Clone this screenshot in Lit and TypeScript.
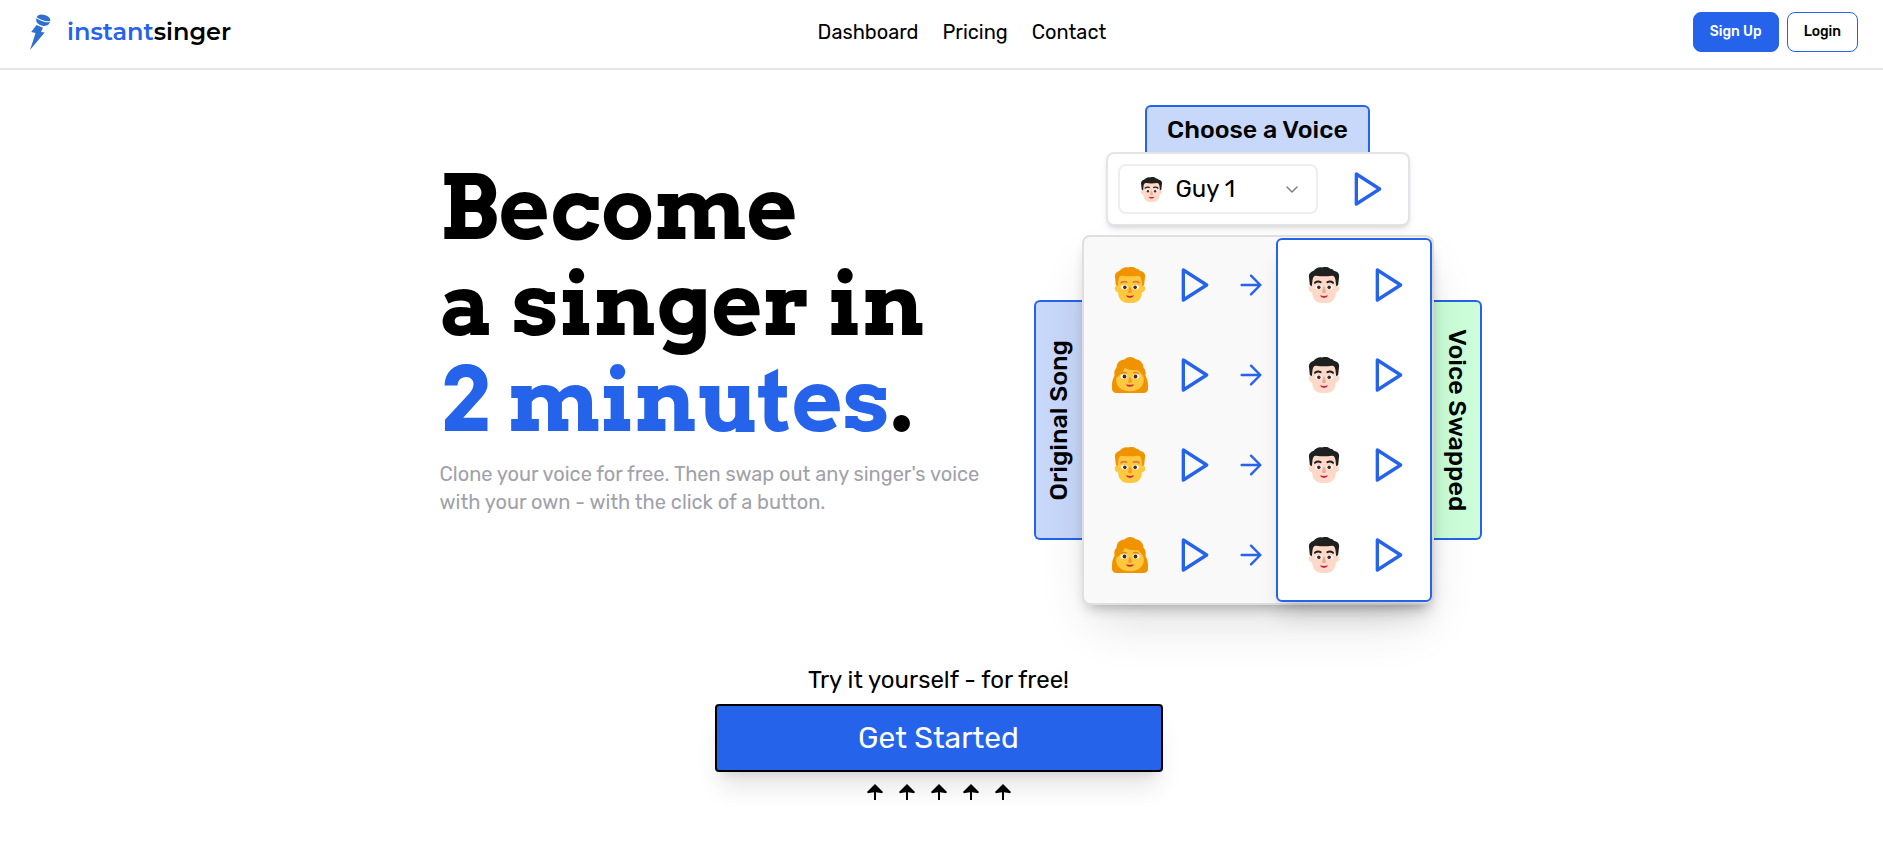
import { LitElement, html, css, svg } from "lit";
import { customElement, property } from "lit/decorators.js";

type FaceKind = "man" | "woman" | "guy";

@customElement("singer-face")
export class SingerFace extends LitElement {
  @property() kind: FaceKind = "man";

  static styles = css`
    :host { display: block; width: 36px; height: 36px; }
    svg { display: block; width: 100%; height: 100%; }
  `;

  private head(skin: string, hair: string, brow: string, nose: string, browWidth: number) {
    return svg`
      <path fill=${skin} d="M5 7h22v9.200c1.600 0 2.600 1.200 2.600 3s-1.300 3.300-3 3.300c-.2 5.800-3.400 9.500-8.600 9.500h-4c-5.200 0-8.400-3.700-8.600-9.500-1.700 0-3-1.500-3-3.300s1-3 2.600-3z"/>
      <path fill=${hair} d="M2.600 8.500C2.300 5.600 4.600 4.100 6.800 3.300 8.800.900 11.500-.3 14.300.5c2.500-1.200 5.500-.8 7.300 1.100 1.500.1 2.500.7 3.200 1.700 3.300.5 5 2.500 4.600 5.200l-.8 7.400-1.800 1.300-.5-5c-.3-3-1.300-4.600-3.300-4.500-4.500.700-9.500.700-14 0-2-.1-3 1.500-3.300 4.500l-.5 5-1.800-1.300z"/>
      <g fill="none" stroke=${brow} stroke-width=${browWidth} stroke-linecap="round">
        <path d="M8 14q2.200-1.800 5-.6M24 14q-2.200-1.800-5-.6"/>
      </g>
      <ellipse cx="11" cy="18" rx="2.900" ry="1.900" fill="#fff"/>
      <ellipse cx="21" cy="18" rx="2.900" ry="1.900" fill="#fff"/>
      <circle cx="11.400" cy="18.100" r="1.600" fill="#402a32"/>
      <circle cx="20.600" cy="18.100" r="1.600" fill="#402a32"/>
      <path fill=${nose} d="M15.500 17.500h1l1.300 5c.1.900-3.700.9-3.600 0z"/>
      <path fill="#c9224b" d="M12.500 25.200q3.500 1 7 0c-.5 3-6.500 3-7 0z"/>`;
  }

  private woman() {
    return svg`
      <path fill="#f09300" d="M11 2.300C13.500-.7 18.500-.7 21 2c4 .3 7 3.500 7 7.500 2 1.800 2.300 4.500 1.700 7 1.300 2.500 2.300 5 2.300 8.500V28c0 2.500-1.500 4-4 4H4c-2.500 0-4-1.500-4-4v-3c0-3.500 1-6 2.300-8.500-.6-2.500-.3-5.200 1.700-7 0-4 3-7.200 7-7.200z"/>
      <path fill="#ffc83d" d="M3.800 18.500c2.500-1.500 5.700-4.500 7.700-9 3.500 2.500 8.500 2 11.500 2.300 2.200 1.500 4.200 4 5.200 6.700.8 7.500-4.200 11.900-12.200 11.900S3 26 3.800 18.500z"/>
      <path d="M8.500 14.600q2-1.600 4.500-.4M23.500 14.600q-2-1.600-4.500-.4" fill="none" stroke="#dc7d28" stroke-width="1" stroke-linecap="round"/>
      <ellipse cx="10.600" cy="17.300" rx="3" ry="2" fill="#fff"/>
      <ellipse cx="21.400" cy="17.300" rx="3" ry="2" fill="#fff"/>
      <circle cx="11.100" cy="17.300" r="1.700" fill="#402a32"/>
      <circle cx="20.900" cy="17.300" r="1.700" fill="#402a32"/>
      <path fill="#f59a23" d="M15.500 18h1l1.300 4.200c.1.900-3.700.9-3.600 0z"/>
      <path fill="#c9224b" d="M12.500 24.200q3.500 1 7 0c-.5 3-6.500 3-7 0z"/>`;
  }

  render() {
    const art =
      this.kind === "woman"
        ? this.woman()
        : this.kind === "guy"
        ? this.head("#ffd9c7", "#1f2020", "#1f2020", "#e5ad91", 1.8)
        : this.head("#ffc83d", "#f09300", "#dc7d3c", "#f59a23", 1.5);
    return html`<svg viewBox="0 0 32 32" aria-hidden="true">${art}</svg>`;
  }
}

@customElement("play-button")
export class PlayButton extends LitElement {
  @property() label = "Play";

  static styles = css`
    :host { display: block; }
    .play {
      display: block;
      width: 40px;
      height: 40px;
      padding: 0;
      border: 0;
      background: none;
      color: #2563eb;
      cursor: pointer;
    }
    svg { display: block; width: 100%; height: 100%; }
  `;

  render() {
    return html`<button class="play" aria-label=${this.label}>
      <svg viewBox="0 0 24 24" fill="none" stroke="currentColor" stroke-width="2" stroke-linecap="round" stroke-linejoin="round">
        <polygon points="5 3 19 12 5 21"></polygon>
      </svg>
    </button>`;
  }
}

@customElement("site-header")
export class SiteHeader extends LitElement {
  static styles = css`
    :host { display: block; }
    .bar {
      display: flex;
      align-items: center;
      justify-content: space-between;
      padding: 12px 25px 16px 24px;
      border-bottom: 2px solid #e4e4e7;
    }
    .brand {
      display: flex;
      align-items: center;
      gap: 11px;
      color: #000;
      font-family: Montserrat, Inter, sans-serif;
      font-size: 24px;
      line-height: 32px;
      font-weight: 600;
      text-decoration: none;
    }
    .brand svg { width: 32px; height: 40px; }
    .accent { color: #2563eb; }
    .links { display: flex; gap: 24px; }
    .links a { color: #000; font-size: 20px; line-height: 28px; text-decoration: none; }
    .actions { display: flex; gap: 8px; }
    .btn {
      height: 40px;
      padding: 0 16px;
      border: 1px solid #2563eb;
      border-radius: 8px;
      background: #fff;
      color: #000;
      font: inherit;
      font-size: 14px;
      line-height: 20px;
      font-weight: 500;
      cursor: pointer;
    }
    .primary { background: #2563eb; color: #fff; }
  `;

  render() {
    return html`<header class="bar">
      <a class="brand" href="#">
        <svg viewBox="0 0 32 40" aria-hidden="true" fill="#2f6fd0">
          <g transform="rotate(17 19 8.500)">
            <path d="M12 7.200C12.300 4.300 15 2.800 19 2.800s6.900 1.500 7.200 4.400c-4.500 1.500-9.900 1.500-14.200 0z"/>
            <path d="M12 8.200c4.300 1.500 9.700 1.500 14.200 0-.2 3.500-3 5.400-7.200 5.400s-6.800-1.900-7-5.400z"/>
          </g>
          <path d="M12.500 13l6.500 2.800-2 4.200 3.700.4L6 38l4.300-13 1.200-4-4.300-1z"/>
        </svg>
        <span><span class="accent">instant</span>singer</span>
      </a>
      <nav class="links">
        <a href="#dashboard">Dashboard</a>
        <a href="#pricing">Pricing</a>
        <a href="#contact">Contact</a>
      </nav>
      <div class="actions">
        <button class="btn primary">Sign Up</button>
        <button class="btn">Login</button>
      </div>
    </header>`;
  }
}

@customElement("voice-demo")
export class VoiceDemo extends LitElement {
  static styles = css`
    :host { display: block; }
    .demo { display: flex; flex-direction: column; align-items: center; }
    .tab {
      box-sizing: border-box;
      display: flex;
      align-items: center;
      justify-content: center;
      border: 2px solid #2563eb;
      background: #c8d8fa;
      color: #000;
      font-size: 25px;
      line-height: 32px;
      font-weight: 500;
      white-space: nowrap;
    }
    .top { width: 225px; height: 47px; border-bottom: 0; border-radius: 6px 6px 0 0; }
    .chooser {
      box-sizing: border-box;
      display: flex;
      align-items: center;
      width: 304px;
      padding: 10px;
      border: 2px solid #e4e4e7;
      border-radius: 8px;
      background: #fff;
      box-shadow: 0 4px 6px -1px rgba(0, 0, 0, 0.1), 0 2px 4px -2px rgba(0, 0, 0, 0.1);
    }
    .picker { position: relative; width: 200px; height: 50px; }
    .picker singer-face { position: absolute; left: 21px; top: 13px; width: 25px; height: 25px; pointer-events: none; }
    .picker svg { position: absolute; right: 16px; top: 15px; width: 20px; height: 20px; pointer-events: none; }
    .picker select {
      width: 100%;
      height: 100%;
      padding: 0 40px 0 56px;
      border: 2px solid #eeeef2;
      border-radius: 8px;
      background: #fff;
      color: #000;
      font: inherit;
      font-size: 24px;
      appearance: none;
    }
    .preview { display: flex; flex: 1; justify-content: center; padding-left: 20px; }
    .songs { display: flex; align-items: center; margin-top: 9px; }
    .side { width: 48px; height: 240px; writing-mode: vertical-rl; }
    .left { border-right: 0; border-radius: 6px 0 0 6px; }
    .left span { transform: rotate(180deg); }
    .right { border-left: 0; border-radius: 0 6px 6px 0; background: #ccffd9; }
    .panel {
      position: relative;
      display: flex;
      padding: 1px 0;
      border: 2px solid #dfdfe1;
      border-radius: 8px;
      background: #f9f9f9;
      box-shadow: 0 25px 50px -12px rgba(0, 0, 0, 0.15), 0 8px 14px -6px rgba(0, 0, 0, 0.3);
    }
    .column { display: grid; grid-auto-rows: 90px; }
    .original { padding: 2px 9px 2px 21px; }
    .swapped {
      padding: 0 21px;
      border: 2px solid #2563eb;
      border-radius: 6px;
      background: #fff;
      box-shadow: 0 20px 25px -5px rgba(0, 0, 0, 0.1), 0 8px 10px -6px rgba(0, 0, 0, 0.1);
    }
    .row { display: flex; align-items: center; gap: 20px; }
    .face { display: flex; justify-content: center; width: 50px; }
    .arrow { width: 32px; height: 32px; color: #2563eb; }
  `;

  private rows: FaceKind[] = ["man", "woman", "man", "woman"];

  render() {
    return html`<section class="demo">
      <label class="tab top" for="voice">Choose a Voice</label>
      <div class="chooser">
        <div class="picker">
          <select id="voice"><option>Guy 1</option></select>
          <singer-face kind="guy"></singer-face>
          <svg viewBox="0 0 20 20" fill="none" stroke="#808080" stroke-width="1.500" stroke-linecap="round" stroke-linejoin="round" aria-hidden="true">
            <path d="M5 8l5 5 5-5"/>
          </svg>
        </div>
        <div class="preview"><play-button label="Play voice sample"></play-button></div>
      </div>
      <div class="songs">
        <div class="tab side left"><span>Original Song</span></div>
        <div class="panel">
          <div class="column original">
            ${this.rows.map(
              (kind) => html`<div class="row">
                <div class="face"><singer-face kind=${kind}></singer-face></div>
                <play-button label="Play original"></play-button>
                <svg class="arrow" viewBox="0 0 24 24" fill="none" stroke="currentColor" stroke-width="1.800" stroke-linecap="round" stroke-linejoin="round" aria-hidden="true">
                  <path d="M5 12h14M12 5l7 7-7 7"/>
                </svg>
              </div>`
            )}
          </div>
          <div class="column swapped">
            ${this.rows.map(
              () => html`<div class="row">
                <div class="face"><singer-face kind="guy"></singer-face></div>
                <play-button label="Play swapped"></play-button>
              </div>`
            )}
          </div>
        </div>
        <div class="tab side right"><span>Voice Swapped</span></div>
      </div>
    </section>`;
  }
}

@customElement("app-root")
export class AppRoot extends LitElement {
  static styles = css`
    :host {
      display: block;
      min-height: 100vh;
      background: #fff;
      color: #000;
      font-family: Rubik, Inter, "Liberation Sans", sans-serif;
    }
    .hero {
      display: flex;
      justify-content: center;
      align-items: flex-start;
      gap: 32px;
      padding: 35px 0 0 38px;
    }
    .copy { width: 562px; padding-top: 55px; }
    h1 {
      margin: 0 0 12px;
      font-family: "Roboto Slab", Arvo, "DejaVu Serif Condensed", "DejaVu Serif", serif;
      font-size: 88px;
      line-height: 96px;
      font-weight: 700;
      white-space: nowrap;
    }
    .accent { color: #2563eb; }
    .lead { margin: 0; color: #a1a1aa; font-size: 20px; line-height: 28px; }
    .cta {
      display: flex;
      flex-direction: column;
      align-items: center;
      padding: 59px 6px 48px 0;
    }
    .try { margin: 0 0 8px; font-size: 24px; line-height: 32px; }
    .start {
      width: 448px;
      height: 68px;
      border: 2px solid #000;
      border-radius: 4px;
      background: #2563eb;
      color: #fff;
      font: inherit;
      font-size: 30px;
      line-height: 36px;
      font-weight: 400;
      cursor: pointer;
      box-shadow: 0 20px 25px -5px rgba(0, 0, 0, 0.1), 0 8px 10px -6px rgba(0, 0, 0, 0.1);
    }
    .arrows { display: flex; gap: 16px; padding-top: 12px; }
    .arrows svg { width: 16px; height: 16px; }
  `;

  render() {
    return html`
      <site-header></site-header>
      <main>
        <div class="hero">
          <div class="copy">
            <h1>Become<br />a singer in<br /><span class="accent">2 minutes</span>.</h1>
            <p class="lead">Clone your voice for free. Then swap out any singer's voice with your own - with the click of a button.</p>
          </div>
          <voice-demo></voice-demo>
        </div>
        <div class="cta">
          <p class="try">Try it yourself - for free!</p>
          <button class="start">Get Started</button>
          <div class="arrows">
            ${[0, 1, 2, 3, 4].map(
              () => html`<svg viewBox="0 0 16 16" aria-hidden="true"><path d="M8 0l8 8q-.5 1.500-2 1L9 8.300V16H7V8.300L2 9Q.5 9.500 0 8z"/></svg>`
            )}
          </div>
        </div>
      </main>
    `;
  }
}
